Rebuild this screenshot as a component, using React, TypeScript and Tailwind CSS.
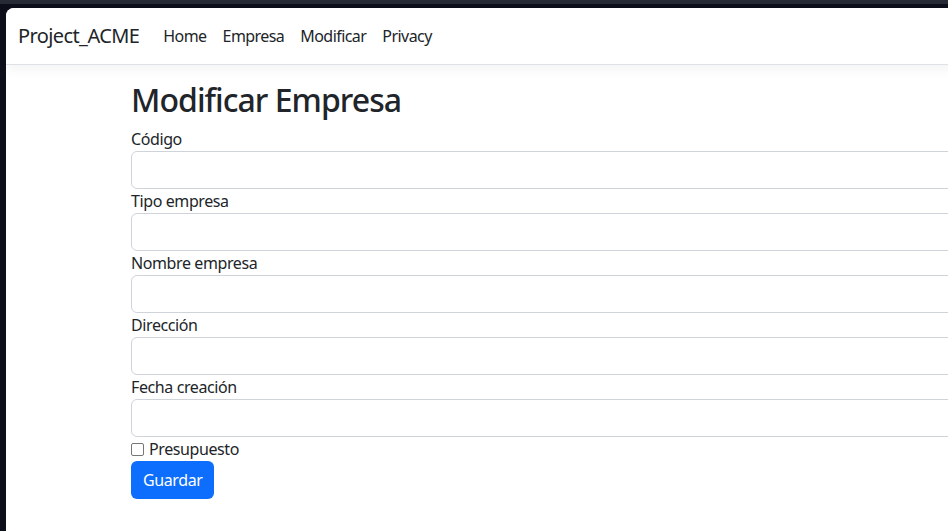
export default function App() {
  const fields = ["Código", "Tipo empresa", "Nombre empresa", "Dirección", "Fecha creación"]

  return (
    <div
      className="w-[948px] h-[531px] overflow-hidden bg-[#0c0e1a] border-t-4 border-[#262a35] pt-1 pl-[6px] text-[#212529] tracking-[-0.025em]"
      style={{ fontFamily: '"Noto Sans", "Open Sans", sans-serif' }}
    >
      <div className="h-full w-[1100px] bg-white rounded-tl-lg overflow-hidden">
        {/* Navbar */}
        <nav className="h-[57px] flex items-center px-3 bg-white border-b border-[#dee2e6] shadow-[0_4px_12px_rgba(0,0,0,0.05)]">
          <span className="text-[20px] mr-4 tracking-[-0.03em]">Project_ACME</span>
          <div className="flex tracking-[-0.035em]">
            {["Home", "Empresa", "Modificar", "Privacy"].map((l) => (
              <a key={l} className="px-2 text-base">
                {l}
              </a>
            ))}
          </div>
        </nav>

        {/* Form */}
        <main className="pl-[125px] mt-4">
          <h1 className="text-[32px] font-medium leading-[1.2] mb-2 tracking-[-0.03em]">Modificar Empresa</h1>
          {fields.map((f) => (
            <div key={f}>
              <label className="block text-base leading-6">{f}</label>
              <div className="h-[38px] w-full border border-[#ced4da] rounded-[6px]" />
            </div>
          ))}
          <div className="flex items-center gap-[5px] leading-6">
            <span className="w-[13px] h-[13px] border border-[#767676] rounded-[2px]" />
            <span>Presupuesto</span>
          </div>
          <button className="h-[38px] px-3 bg-[#0d6efd] text-white rounded-[6px] text-base">Guardar</button>
        </main>
      </div>
    </div>
  )
}
